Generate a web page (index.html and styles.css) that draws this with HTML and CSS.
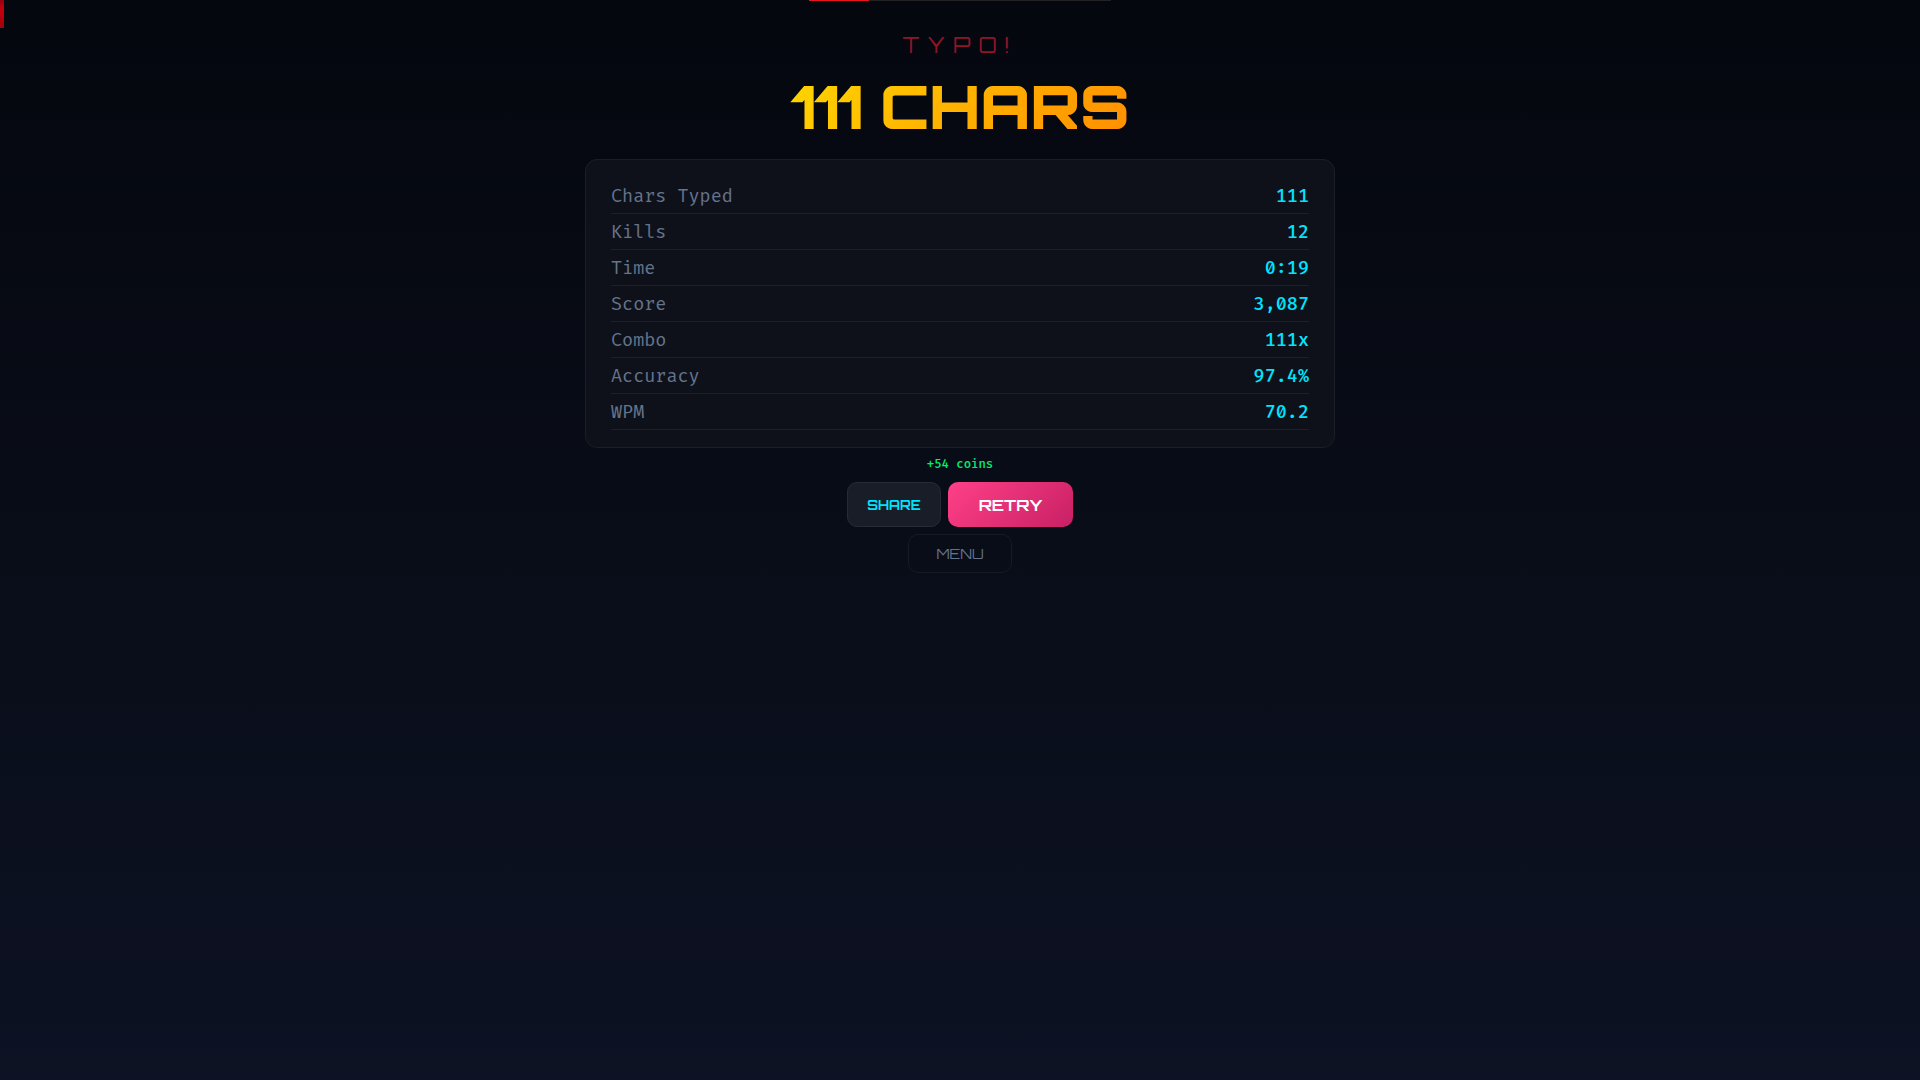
FILE: index.html
```html
<!DOCTYPE html>
<html lang="en">

<head>
    <meta charset="UTF-8">
    <meta name="viewport" content="width=device-width, initial-scale=1.0">
    <title>Game Over</title>
    <link rel="stylesheet" href="styles.css">
</head>

<body>
    <div class="edge-flash"></div>
    <div class="timer-bar">
        <div class="timer-fill" style="width: 20%"></div>
    </div>

    <main class="game-over">
        <h2 class="reason">TYPO!</h2>
        <h1 class="headline">111 CHARS</h1>

        <div class="stats-card">
            <table class="stats">
                <tr>
                    <th scope="row">Chars Typed</th>
                    <td>111</td>
                </tr>
                <tr>
                    <th scope="row">Kills</th>
                    <td>12</td>
                </tr>
                <tr>
                    <th scope="row">Time</th>
                    <td>0:19</td>
                </tr>
                <tr>
                    <th scope="row">Score</th>
                    <td>3,087</td>
                </tr>
                <tr>
                    <th scope="row">Combo</th>
                    <td>111x</td>
                </tr>
                <tr>
                    <th scope="row">Accuracy</th>
                    <td>97.4%</td>
                </tr>
                <tr>
                    <th scope="row">WPM</th>
                    <td>70.2</td>
                </tr>
            </table>
        </div>

        <p class="coins">+54 coins</p>

        <div class="actions">
            <button type="button" class="btn btn-share">SHARE</button>
            <button type="button" class="btn btn-retry">RETRY</button>
        </div>
        <button type="button" class="btn btn-menu">MENU</button>
    </main>
</body>

</html>
```
FILE: styles.css
```css
* {
    box-sizing: border-box;
}

body {
    margin: 0;
    min-height: 100vh;
    background: linear-gradient(180deg, #04070e 0%, #090d18 50%, #0d1224 100%);
    font-family: "Orbitron", "Inter", sans-serif;
    color: #fff;
}

/* HUD leftovers along the window edge */
.edge-flash {
    position: absolute;
    top: 0;
    left: 0;
    width: 4px;
    height: 28px;
    background: linear-gradient(180deg, #900010, #c4000e 30%, #a0000c);
}

.timer-bar {
    width: 302px;
    height: 1px;
    margin: 0 auto;
    background: #222224;
}

.timer-fill {
    height: 100%;
    background: #e8141e;
}

.game-over {
    display: flex;
    flex-direction: column;
    align-items: center;
    padding: 28px 16px;
}

.reason {
    margin: 0;
    font-size: 22px;
    line-height: 32px;
    font-weight: 400;
    letter-spacing: 8px;
    color: #921428;
}

.headline {
    margin: 6px 0 14px;
    font-size: 60px;
    line-height: 78px;
    font-weight: 900;
    background: linear-gradient(135deg, #ffd700, #ff8c00);
    -webkit-background-clip: text;
    background-clip: text;
    color: transparent;
}

.stats-card {
    width: 100%;
    max-width: 750px;
    padding: 18px 25px 17px;
    background: #0e111a;
    border: 1px solid #1b1e27;
    border-radius: 12px;
}

.stats {
    width: 100%;
    border-collapse: separate;
    border-spacing: 0;
    font-family: "Fira Code", "DejaVu Sans Mono", monospace;
    font-size: 18px;
    line-height: 33px;
}

.stats th,
.stats td {
    padding: 2px 0 0;
    border-bottom: 1px solid #1d2029;
}

.stats th {
    text-align: left;
    font-weight: 400;
    color: #64748b;
}

.stats td {
    text-align: right;
    font-weight: 500;
    color: #00e5ff;
}

.coins {
    margin: 8px 0;
    font-family: "Fira Code", "DejaVu Sans Mono", monospace;
    font-size: 12px;
    font-weight: 500;
    line-height: 18px;
    color: #00f070;
}

.actions {
    display: flex;
    gap: 7px;
    margin-bottom: 7px;
}

.btn {
    border: 1px solid transparent;
    border-radius: 10px;
    font-family: inherit;
    cursor: pointer;
}

.btn-share {
    min-width: 94px;
    height: 45px;
    background: #191d27;
    border-color: #272b34;
    font-size: 13px;
    font-weight: 700;
    color: #00e5ff;
}

.btn-retry {
    min-width: 125px;
    height: 45px;
    background: linear-gradient(135deg, #ff4088, #c82064);
    border: none;
    font-size: 16px;
    font-weight: 700;
    color: #fff;
}

.btn-menu {
    min-width: 104px;
    height: 39px;
    background: transparent;
    border-color: #171a24;
    font-size: 14px;
    font-weight: 400;
    color: #64748b;
}
```
